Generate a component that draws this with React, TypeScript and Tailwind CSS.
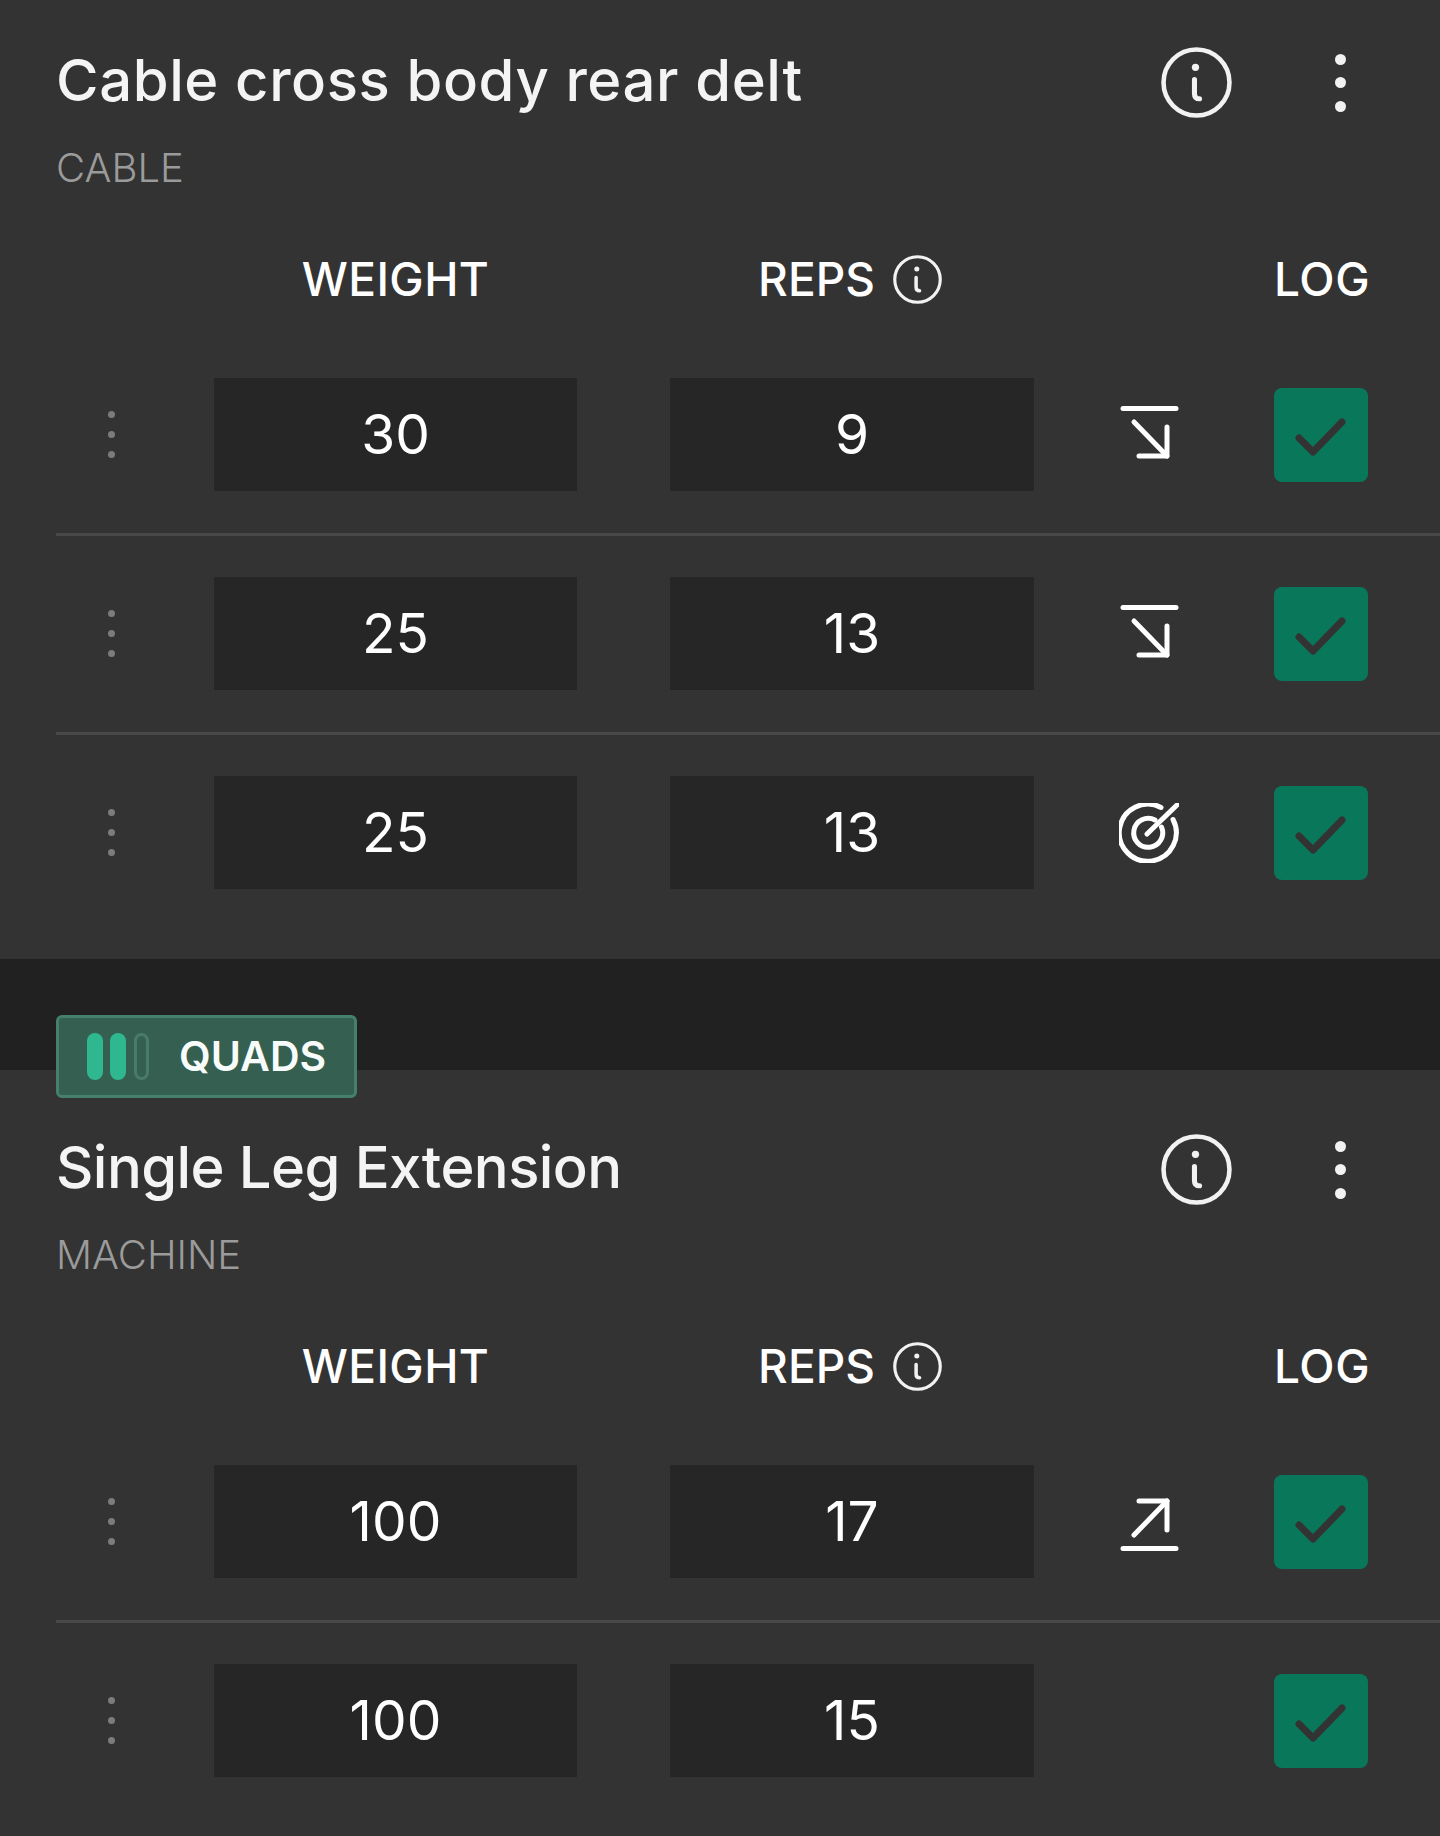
const font = "font-['Inter','Liberation_Sans',sans-serif]";

const InfoIcon = ({ size }: { size: number }) => (
  <svg width={size} height={size} viewBox="0 0 70 70" fill="none" stroke="#f2f2f2" strokeLinecap="round">
    <circle cx="35" cy="35" r="32.5" strokeWidth="4.5" />
    <circle cx="34" cy="20" r="3.6" fill="#f2f2f2" stroke="none" />
    <path d="M33 32 V46 Q33 51 38 51" strokeWidth="5" />
  </svg>
);

const GripDots = () => (
  <div className="flex w-[158px] flex-col gap-[13px] pl-[52px]">
    <span className="h-[7px] w-[7px] rounded-full bg-[#7c7c7c]" />
    <span className="h-[7px] w-[7px] rounded-full bg-[#7c7c7c]" />
    <span className="h-[7px] w-[7px] rounded-full bg-[#7c7c7c]" />
  </div>
);

const ArrowDown = () => (
  <svg width="60" height="60" viewBox="0 0 60 60" fill="none" stroke="#ffffff" strokeWidth="5" strokeLinecap="round" strokeLinejoin="round">
    <path d="M4 3.5 H57" />
    <path d="M15 17 L48 51" />
    <path d="M48 22 V51 H20" />
  </svg>
);

const ArrowUp = () => (
  <svg width="60" height="60" viewBox="0 0 60 60" fill="none" stroke="#ffffff" strokeWidth="5" strokeLinecap="round" strokeLinejoin="round">
    <path d="M4 56.5 H57" />
    <path d="M15 43 L48 9" />
    <path d="M48 38 V9 H20" />
  </svg>
);

const Target = () => (
  <svg width="60" height="60" viewBox="0 0 60 60" fill="none" stroke="#ffffff" strokeWidth="5" strokeLinecap="round">
    <path d="M42 4.5 A28.5 28.5 0 1 0 54 16.5" />
    <path d="M36 17 A14.5 14.5 0 1 0 42.5 24" />
    <path d="M28 31 L59 1" />
  </svg>
);

const CheckBox = () => (
  <div className="h-[94px] w-[94px] rounded-[8px] bg-[#09785a]">
    <svg width="94" height="94" viewBox="0 0 94 94" fill="none" stroke="#333333" strokeWidth="7" strokeLinecap="round" strokeLinejoin="round">
      <path d="M25 50 L39 64 L68 34" />
    </svg>
  </div>
);

const SetRow = ({ weight, reps, icon }: { weight: string; reps: string; icon?: React.ReactNode }) => (
  <div className="flex items-center pl-[56px]">
    <GripDots />
    <div className="flex h-[113px] w-[363px] items-center justify-center bg-[#262626] text-[55px] font-normal text-white">
      {weight}
    </div>
    <div className="ml-[93px] flex h-[113px] w-[364px] items-center justify-center bg-[#262626] text-[55px] font-normal text-white">
      {reps}
    </div>
    <div className="flex w-[240px] items-center justify-center pr-[10px]">{icon}</div>
    <CheckBox />
  </div>
);

const Divider = () => <div className="mt-[42px] mb-[41px] ml-[56px] h-[3px] bg-[#484848]" />;

const ExerciseHeader = ({ title, kind, titleClass }: { title: string; kind: string; titleClass: string }) => (
  <>
    <div className="flex h-[71px] items-center pl-[56px]">
      <h2 className={`mt-[4px] h-[58px] flex-1 self-start text-[58px] leading-[58px] font-medium text-[#f4f4f4] ${titleClass}`}>
        {title}
      </h2>
      <InfoIcon size={71} />
      <div className="mr-[94px] ml-[103px] flex flex-col gap-[12.5px]">
        <span className="h-[11px] w-[11px] rounded-full bg-[#f2f2f2]" />
        <span className="h-[11px] w-[11px] rounded-full bg-[#f2f2f2]" />
        <span className="h-[11px] w-[11px] rounded-full bg-[#f2f2f2]" />
      </div>
    </div>
    <div className="mt-[26px] pl-[56px] text-[40px] leading-[48px] font-light text-[#9b9b9b]">{kind}</div>
    <div className="mt-[62px] flex h-[50px] items-center pl-[56px] text-[46px] font-medium text-white">
      <div className="w-[158px]" />
      <div className="w-[363px] text-center tracking-[0.4px]">WEIGHT</div>
      <div className="ml-[93px] flex w-[364px] items-center justify-center gap-[18px] pr-[4px]">
        <span>REPS</span>
        <InfoIcon size={49} />
      </div>
      <div className="w-[240px]" />
      <div className="w-[94px] text-center tracking-[0.6px]">LOG</div>
    </div>
  </>
);

export default function App() {
  return (
    <div className={`h-[1836px] w-[1440px] overflow-hidden bg-[#333333] ${font}`}>
      {/* First exercise */}
      <section className="h-[959px] pt-[47px]">
        <ExerciseHeader title="Cable cross body rear delt" kind="CABLE" titleClass="tracking-[0.6px]" />
        <div className="mt-[74px]">
          <SetRow weight="30" reps="9" icon={<ArrowDown />} />
          <Divider />
          <SetRow weight="25" reps="13" icon={<ArrowDown />} />
          <Divider />
          <SetRow weight="25" reps="13" icon={<Target />} />
        </div>
      </section>

      <div className="h-[111px] bg-[#212121]" />

      {/* Second exercise */}
      <section className="relative pt-[64px]">
        <div className="absolute top-[-55px] left-[56px] flex h-[83px] w-[301px] items-center rounded-[6px] border-[3px] border-[#44806b] bg-[#355f50] pl-[28px]">
          <span className="h-[47px] w-[16px] rounded-full bg-[#2fb88f]" />
          <span className="ml-[7px] h-[47px] w-[16px] rounded-full bg-[#2fb88f]" />
          <span className="ml-[8px] h-[47px] w-[15px] rounded-full border-[3px] border-[#4a7a68]" />
          <span className="ml-[30px] text-[41px] font-semibold text-[#f7fbf9]">QUADS</span>
        </div>
        <ExerciseHeader title="Single Leg Extension" kind="MACHINE" titleClass="tracking-[-0.6px]" />
        <div className="mt-[74px]">
          <SetRow weight="100" reps="17" icon={<ArrowUp />} />
          <Divider />
          <SetRow weight="100" reps="15" />
        </div>
      </section>
    </div>
  );
}
